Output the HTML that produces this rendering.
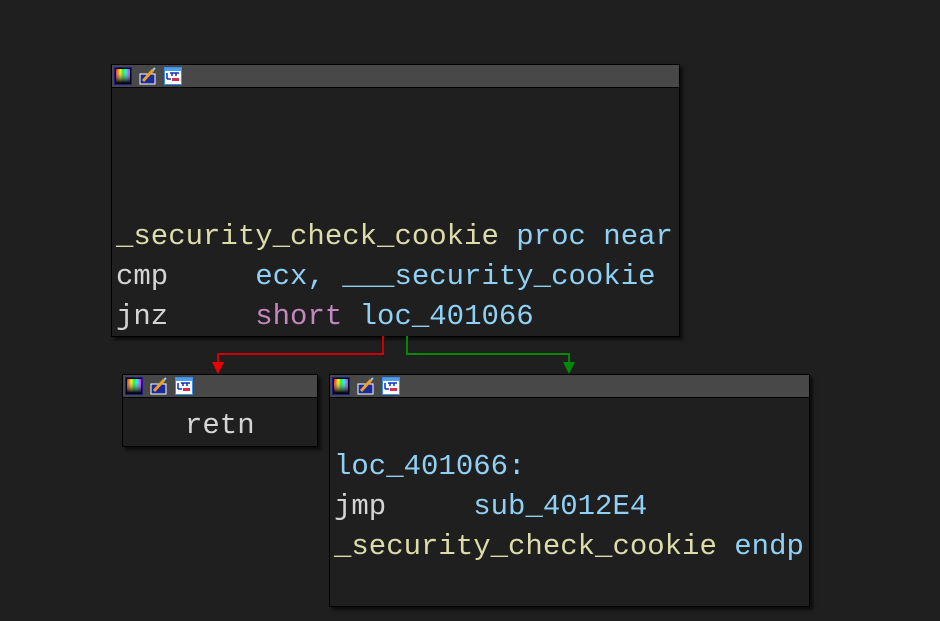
<!DOCTYPE html>
<html><head><meta charset="utf-8"><style>
body{margin:0;width:940px;height:621px;background:#1f1f1f;position:relative;overflow:hidden;font-family:"Liberation Mono","DejaVu Sans Mono",monospace;}
.n{position:absolute;background:#1f1f1f;border:1px solid #000;box-shadow:3px 3px 3px rgba(0,0,0,.6);}
.h{position:absolute;left:0;right:0;top:0;height:22px;background:#484848;border-bottom:1px solid #000;}
.ic{position:absolute;top:2px;width:18px;height:18px;}
.t{position:absolute;font-size:29px;line-height:40px;white-space:pre;color:#d4d4d4;}
.y{color:#dcdcaa}.b{color:#8fd0f5}.p{color:#c586c0}.w{color:#d4d4d4}
.l{position:absolute}
</style></head><body>
<svg width="0" height="0" style="position:absolute"><defs>
<linearGradient id="g1" x1="0" x2="1"><stop offset="0" stop-color="#f00"/><stop offset=".3" stop-color="#ff0"/><stop offset=".5" stop-color="#0f0"/><stop offset=".7" stop-color="#0ff"/><stop offset="1" stop-color="#f0f"/></linearGradient>
<linearGradient id="g2" x1="0" y1="0" x2="0" y2="1"><stop offset="0" stop-color="#fff" stop-opacity="0"/><stop offset="1" stop-color="#000"/></linearGradient>
</defs></svg>
<div class="n" style="left:111px;top:64px;width:567px;height:271px;">
<div class="h">
<svg class="ic" style="left:2px" viewBox="0 0 18 18"><rect x=".5" y=".5" width="17" height="17" fill="#002" stroke="#1a1a8a"/><rect x="2" y="2" width="14" height="14" fill="url(#g1)"/><rect x="2" y="2" width="14" height="14" fill="url(#g2)"/></svg>
<svg class="ic" style="left:27px" viewBox="0 0 18 18"><rect x="1" y="7" width="15" height="10" fill="#1a2a9a" stroke="#fff"/><path d="M4 14 L14 3" stroke="#f0a020" stroke-width="3"/><path d="M14 3 L16 1" stroke="#8cf" stroke-width="2"/></svg>
<svg class="ic" style="left:52px" viewBox="0 0 18 18"><rect x=".5" y=".5" width="17" height="17" fill="#fff" stroke="#3a8ef0"/><rect x="1" y="1" width="16" height="3" fill="#4aa0f0"/><path d="M3 6v6M3 12h4M6 6h9M8 6v3M12 6v3" stroke="#1030c0" stroke-width="1.5"/><rect x="8" y="11" width="7" height="3" fill="#d03050"/></svg>
</div>
<div class="t" style="left:4px;top:152px"><span class="y">_security_check_cookie</span> <span class="b">proc near</span></div>
<div class="t" style="left:4px;top:192px"><span class="w">cmp     </span><span class="b">ecx, ___security_cookie</span></div>
<div class="t" style="left:4px;top:232px"><span class="w">jnz     </span><span class="p">short</span> <span class="b">loc_401066</span></div>
</div>
<svg class="l" style="left:0;top:0" width="940" height="621">
<path d="M383 336V354H218V366" stroke="#c00" stroke-width="2" fill="none"/>
<path d="M212 362L218 374L224 362Z" fill="#e00"/>
<path d="M407 336V354H569V366" stroke="#080" stroke-width="2" fill="none"/>
<path d="M563 362L569 374L575 362Z" fill="#080"/>
</svg>
<div class="n" style="left:122px;top:374px;width:194px;height:71px;">
<div class="h">
<svg class="ic" style="left:2px" viewBox="0 0 18 18"><rect x=".5" y=".5" width="17" height="17" fill="#002" stroke="#1a1a8a"/><rect x="2" y="2" width="14" height="14" fill="url(#g1)"/><rect x="2" y="2" width="14" height="14" fill="url(#g2)"/></svg>
<svg class="ic" style="left:27px" viewBox="0 0 18 18"><rect x="1" y="7" width="15" height="10" fill="#1a2a9a" stroke="#fff"/><path d="M4 14 L14 3" stroke="#f0a020" stroke-width="3"/><path d="M14 3 L16 1" stroke="#8cf" stroke-width="2"/></svg>
<svg class="ic" style="left:52px" viewBox="0 0 18 18"><rect x=".5" y=".5" width="17" height="17" fill="#fff" stroke="#3a8ef0"/><rect x="1" y="1" width="16" height="3" fill="#4aa0f0"/><path d="M3 6v6M3 12h4M6 6h9M8 6v3M12 6v3" stroke="#1030c0" stroke-width="1.5"/><rect x="8" y="11" width="7" height="3" fill="#d03050"/></svg>
</div>
<div class="t" style="left:62px;top:31px">retn</div>
</div>
<div class="n" style="left:329px;top:374px;width:479px;height:231px;">
<div class="h">
<svg class="ic" style="left:2px" viewBox="0 0 18 18"><rect x=".5" y=".5" width="17" height="17" fill="#002" stroke="#1a1a8a"/><rect x="2" y="2" width="14" height="14" fill="url(#g1)"/><rect x="2" y="2" width="14" height="14" fill="url(#g2)"/></svg>
<svg class="ic" style="left:27px" viewBox="0 0 18 18"><rect x="1" y="7" width="15" height="10" fill="#1a2a9a" stroke="#fff"/><path d="M4 14 L14 3" stroke="#f0a020" stroke-width="3"/><path d="M14 3 L16 1" stroke="#8cf" stroke-width="2"/></svg>
<svg class="ic" style="left:52px" viewBox="0 0 18 18"><rect x=".5" y=".5" width="17" height="17" fill="#fff" stroke="#3a8ef0"/><rect x="1" y="1" width="16" height="3" fill="#4aa0f0"/><path d="M3 6v6M3 12h4M6 6h9M8 6v3M12 6v3" stroke="#1030c0" stroke-width="1.5"/><rect x="8" y="11" width="7" height="3" fill="#d03050"/></svg>
</div>
<div class="t" style="left:4px;top:72px"><span class="b">loc_401066:</span></div>
<div class="t" style="left:4px;top:112px"><span class="w">jmp     </span><span class="b">sub_4012E4</span></div>
<div class="t" style="left:4px;top:152px"><span class="y">_security_check_cookie</span> <span class="b">endp</span></div>
</div>
</body></html>
